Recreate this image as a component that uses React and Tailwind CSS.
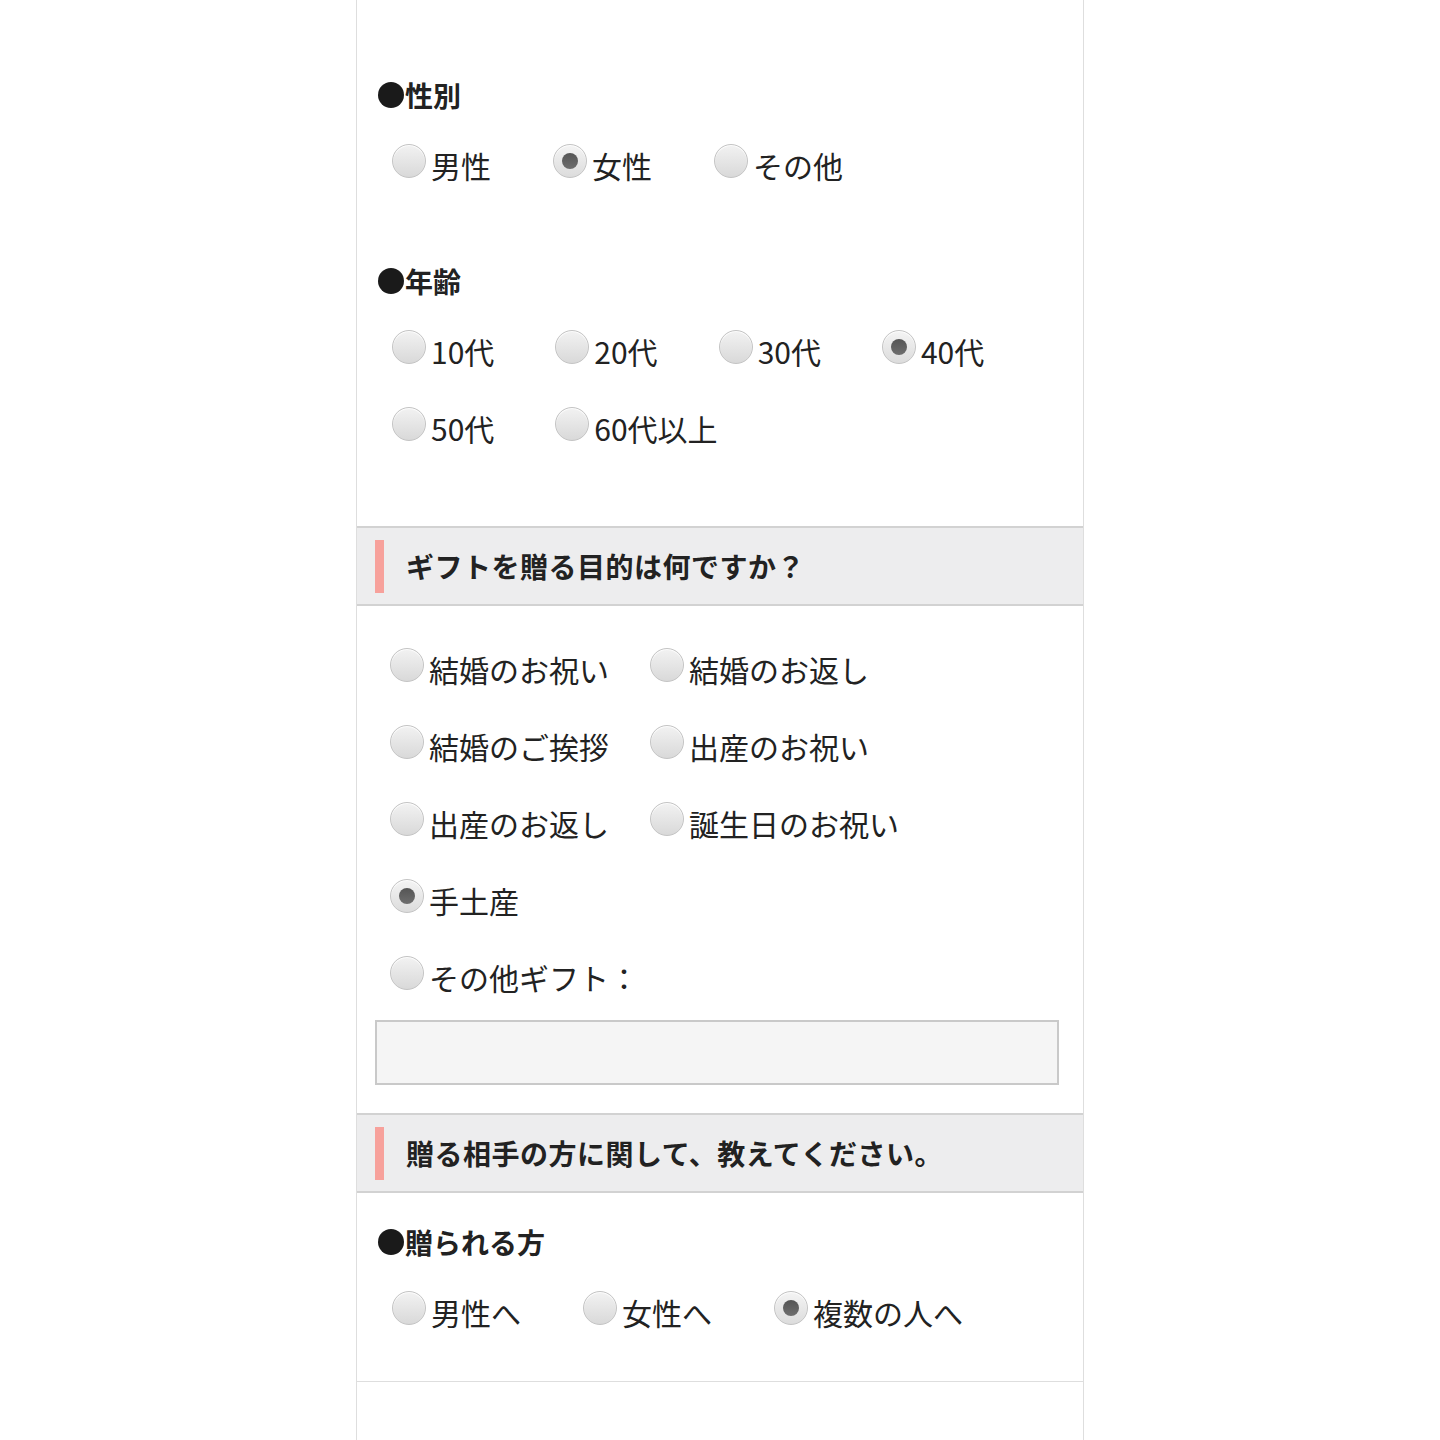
import React from "react";

const font = { fontFamily: '"Noto Sans CJK JP", "Noto Sans", sans-serif' };

function Radio({ label, checked }) {
  return (
    <label className="flex items-center h-[44px] shrink-0">
      <span
        className={
          "relative -mt-[9px] w-[34px] h-[34px] rounded-full border border-[#c4c4c4] flex items-center justify-center shadow-[inset_0_1px_1px_rgba(255,255,255,0.9)] " +
          (checked
            ? "bg-gradient-to-b from-[#f4f4f4] to-[#dcdcdc]"
            : "bg-gradient-to-b from-[#f2f2f2] to-[#d9d9d9]")
        }
      >
        {checked && (
          <span className="w-[16px] h-[16px] rounded-full bg-gradient-to-b from-[#555] to-[#6e6e6e]" />
        )}
      </span>
      <span className="ml-[5px] text-[30px] leading-[44px] text-[#222]">{label}</span>
    </label>
  );
}

function Heading({ children }) {
  return (
    <div className="h-[40px] flex items-center text-[28px] font-bold text-[#222] leading-[40px]">
      <span className="inline-block w-[26px] h-[26px] rounded-full bg-[#1a1a1a] mr-[1px]" />
      {children}
    </div>
  );
}

function SectionBar({ children }) {
  return (
    <div className="h-[80px] bg-[#ededee] border-y-2 border-[#d2d2d2] flex items-center pl-[18px]">
      <span className="w-[9px] h-[53px] bg-[#f7a19b]" />
      <span className="ml-[22px] text-[28px] font-bold text-[#222] tracking-[0.5px]">{children}</span>
    </div>
  );
}

export default function App() {
  return (
    <div className="min-h-screen bg-white" style={font}>
      <div className="mx-auto w-[728px] border-x border-[#dedede] bg-white">
        <div className="pt-[75px] px-[21px] pb-[76px]">
          <Heading>性別</Heading>
          <div className="mt-[28px] ml-[14px] flex gap-x-[62px]">
            <Radio label="男性" />
            <Radio label="女性" checked />
            <Radio label="その他" />
          </div>
          <div className="mt-[74px]">
            <Heading>年齢</Heading>
          </div>
          <div className="mt-[28px] ml-[14px] flex flex-wrap gap-x-[61px] gap-y-[33px] w-[640px]">
            <Radio label="10代" />
            <Radio label="20代" />
            <Radio label="30代" />
            <Radio label="40代" checked />
            <Radio label="50代" />
            <Radio label="60代以上" />
          </div>
        </div>

        <SectionBar>ギフトを贈る目的は何ですか？</SectionBar>

        <div className="pt-[41px] pl-[18px] pr-[25px] pb-[28px]">
          <div className="ml-[15px] flex flex-col gap-y-[33px]">
            <div className="flex">
              <div className="w-[260px]"><Radio label="結婚のお祝い" /></div>
              <Radio label="結婚のお返し" />
            </div>
            <div className="flex">
              <div className="w-[260px]"><Radio label="結婚のご挨拶" /></div>
              <Radio label="出産のお祝い" />
            </div>
            <div className="flex">
              <div className="w-[260px]"><Radio label="出産のお返し" /></div>
              <Radio label="誕生日のお祝い" />
            </div>
            <div className="flex">
              <Radio label="手土産" checked />
            </div>
            <div className="flex">
              <Radio label="その他ギフト：" />
            </div>
          </div>
          <input
            type="text"
            className="mt-[21px] block w-[684px] h-[65px] bg-[#f5f5f5] border-2 border-[#c9c9c9] outline-none"
          />
        </div>

        <SectionBar>贈る相手の方に関して、教えてください。</SectionBar>

        <div className="pt-[29px] px-[21px] pb-[47px] border-b border-[#dedede]">
          <Heading>贈られる方</Heading>
          <div className="mt-[28px] ml-[14px] flex gap-x-[62px]">
            <Radio label="男性へ" />
            <Radio label="女性へ" />
            <Radio label="複数の人へ" checked />
          </div>
        </div>
        <div className="h-[62px]" />
      </div>
    </div>
  );
}
